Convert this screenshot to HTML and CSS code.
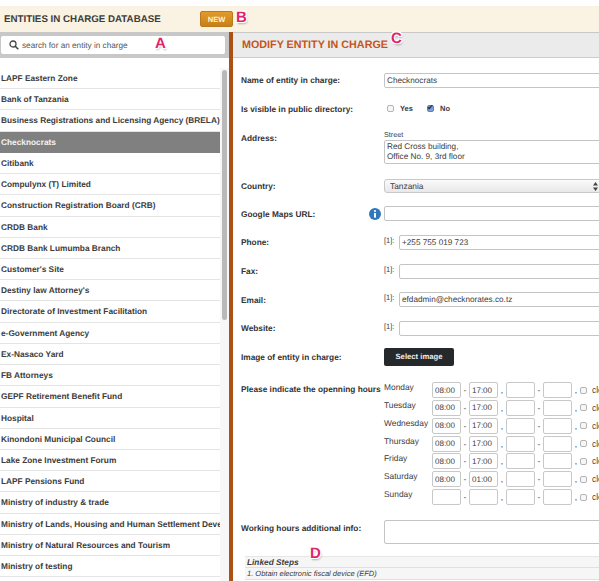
FILE: index.html
```html
<!DOCTYPE html>
<html lang="en">
<head>
    <meta charset="UTF-8">
    <title>Entities in charge database</title>
    <link rel="stylesheet" href="styles.css">
</head>
<body>

    <header class="topbar">
        <h1>ENTITIES IN CHARGE DATABASE</h1>
        <button class="btn-new">NEW</button>
    </header>

    <div class="main">

        <aside class="side">
            <div class="search">
                <div class="search-box">
                    <svg width="10" height="10" viewBox="0 0 10 10"><circle cx="4" cy="4" r="3" fill="none" stroke="#444" stroke-width="1.3"/><path d="M6.2 6.2 L9.3 9.3" stroke="#444" stroke-width="1.6"/></svg>
                    <span>search for an entity in charge</span>
                </div>
            </div>
            <div class="list-wrap">
                <ul class="list">
                    <li>LAPF Eastern Zone</li>
                    <li>Bank of Tanzania</li>
                    <li>Business Registrations and Licensing Agency (BRELA)</li>
                    <li class="selected">Checknocrats</li>
                    <li>Citibank</li>
                    <li>Compulynx (T) Limited</li>
                    <li>Construction Registration Board (CRB)</li>
                    <li>CRDB Bank</li>
                    <li>CRDB Bank Lumumba Branch</li>
                    <li>Customer's Site</li>
                    <li>Destiny law Attorney's</li>
                    <li>Directorate of Investment Facilitation</li>
                    <li>e-Government Agency</li>
                    <li>Ex-Nasaco Yard</li>
                    <li>FB Attorneys</li>
                    <li>GEPF Retirement Benefit Fund</li>
                    <li>Hospital</li>
                    <li>Kinondoni Municipal Council</li>
                    <li>Lake Zone Investment Forum</li>
                    <li>LAPF Pensions Fund</li>
                    <li>Ministry of industry &amp; trade</li>
                    <li>Ministry of Lands, Housing and Human Settlement Development</li>
                    <li>Ministry of Natural Resources and Tourism</li>
                    <li>Ministry of testing</li>
                </ul>
                <div class="track"><div class="thumb"></div></div>
            </div>
        </aside>

        <section class="panel">
            <h2 class="panel-title">MODIFY ENTITY IN CHARGE</h2>

            <div class="form">
                <div class="row">
                    <label>Name of entity in charge:</label>
                    <input class="field" type="text" value="Checknocrats">
                </div>
                <div class="row">
                    <label>Is visible in public directory:</label>
                    <div class="radios">
                        <input class="check" type="checkbox"><b>Yes</b>
                        <input class="check" type="checkbox" checked><b>No</b>
                    </div>
                </div>
                <div class="row row-address">
                    <label>Address:</label>
                    <div class="value">
                        <div class="street">Street</div>
                        <textarea class="field area">Red Cross building,
Office No. 9, 3rd floor</textarea>
                    </div>
                </div>
                <div class="row row-country">
                    <label>Country:</label>
                    <div class="select-wrap">
                        <select class="select"><option>Tanzania</option></select>
                        <svg class="arrows" width="5" height="9" viewBox="0 0 5 9"><path d="M2.5 0 L5 3.5 H0 Z M2.5 9 L5 5.5 H0 Z" fill="#444"/></svg>
                    </div>
                </div>
                <div class="row">
                    <label>Google Maps URL:</label>
                    <svg class="info" width="12" height="12" viewBox="0 0 12 12"><circle cx="6" cy="6" r="6" fill="#2f78bd"/><circle cx="6" cy="3" r="1.1" fill="#fff"/><rect x="5" y="5" width="2" height="4.6" fill="#fff"/></svg>
                    <input class="field" type="text">
                </div>
                <div class="row">
                    <label>Phone:</label>
                    <span class="idx">[1]:</span>
                    <input class="field" type="text" value="+255 755 019 723">
                </div>
                <div class="row">
                    <label>Fax:</label>
                    <span class="idx">[1]:</span>
                    <input class="field" type="text">
                </div>
                <div class="row">
                    <label>Email:</label>
                    <span class="idx">[1]:</span>
                    <input class="field" type="text" value="efdadmin@checknorates.co.tz">
                </div>
                <div class="row">
                    <label>Website:</label>
                    <span class="idx">[1]:</span>
                    <input class="field" type="text">
                </div>
                <div class="row">
                    <label>Image of entity in charge:</label>
                    <button class="btn-image">Select image</button>
                </div>

                <div class="hours">
                    <label>Please indicate the openning hours</label>
                    <div class="days">
                        <div class="day"><span class="day-name">Monday</span><input class="time" value="08:00"><i>-</i><input class="time" value="17:00"><i>,</i><input class="time"><i>-</i><input class="time"><i>,</i><input type="checkbox" class="check closed"><span class="closed-text">closed</span></div>
                        <div class="day"><span class="day-name">Tuesday</span><input class="time" value="08:00"><i>-</i><input class="time" value="17:00"><i>,</i><input class="time"><i>-</i><input class="time"><i>,</i><input type="checkbox" class="check closed"><span class="closed-text">closed</span></div>
                        <div class="day"><span class="day-name">Wednesday</span><input class="time" value="08:00"><i>-</i><input class="time" value="17:00"><i>,</i><input class="time"><i>-</i><input class="time"><i>,</i><input type="checkbox" class="check closed"><span class="closed-text">closed</span></div>
                        <div class="day"><span class="day-name">Thursday</span><input class="time" value="08:00"><i>-</i><input class="time" value="17:00"><i>,</i><input class="time"><i>-</i><input class="time"><i>,</i><input type="checkbox" class="check closed"><span class="closed-text">closed</span></div>
                        <div class="day"><span class="day-name">Friday</span><input class="time" value="08:00"><i>-</i><input class="time" value="17:00"><i>,</i><input class="time"><i>-</i><input class="time"><i>,</i><input type="checkbox" class="check closed"><span class="closed-text">closed</span></div>
                        <div class="day"><span class="day-name">Saturday</span><input class="time" value="08:00"><i>-</i><input class="time" value="01:00"><i>,</i><input class="time"><i>-</i><input class="time"><i>,</i><input type="checkbox" class="check closed"><span class="closed-text">closed</span></div>
                        <div class="day"><span class="day-name">Sunday</span><input class="time"><i>-</i><input class="time"><i>,</i><input class="time"><i>-</i><input class="time"><i>,</i><input type="checkbox" class="check closed"><span class="closed-text">closed</span></div>
                    </div>
                </div>

                <div class="row row-info">
                    <label>Working hours additional info:</label>
                    <textarea class="field info-area"></textarea>
                </div>

                <div class="linked">
                    <div class="linked-head">Linked Steps</div>
                    <div class="linked-item">1. Obtain electronic fiscal device (EFD)</div>
                </div>
            </div>
        </section>
    </div>

    <!-- pink markers on top of the screenshot -->
    <span class="mark mark-a">A</span>
    <span class="mark mark-b">B</span>
    <span class="mark mark-c">C</span>
    <span class="mark mark-d">D</span>

</body>
</html>
```

FILE: styles.css
```css
html, body {
    margin: 0;
    height: 581px;
    overflow: hidden;
    background: #fff;
}

body {
    position: relative;
    padding-top: 6px;
    box-sizing: border-box;
    font-family: "Liberation Sans", Arial, sans-serif;
    color: #3c3c3c;
    font-size: 8.3px;
    text-rendering: geometricPrecision;
}

input, textarea, select, button {
    text-rendering: geometricPrecision;
}

.topbar {
    height: 26px;
    background: #faf3e3;
    display: flex;
    align-items: center;
    padding-left: 4px;
    box-sizing: border-box;
}

.topbar h1 {
    margin: 0;
    width: 196px;
    font-size: 9.75px;
    color: #3c3c3c;
}

.btn-new {
    width: 33px;
    height: 16px;
    padding: 0;
    border: 1px solid #b87a1c;
    border-radius: 2px;
    background: linear-gradient(#e39a2c, #c87f16);
    color: #fff3d8;
    font: bold 7.5px "Liberation Sans", Arial, sans-serif;
}

.main {
    display: flex;
    height: 549px;
}

/* left column */
.side {
    width: 229px;
    flex: none;
}

.search {
    height: 26px;
    background: #c8c8c8;
    padding: 4px 4px 3px 1px;
    box-sizing: border-box;
}

.search-box {
    height: 18px;
    background: #fff;
    border-radius: 2px;
    display: flex;
    align-items: center;
    gap: 3px;
    padding-left: 8px;
    color: #555;
    font-size: 8.2px;
}

.list-wrap {
    display: flex;
    padding-top: 10px;
}

.list {
    list-style: none;
    margin: 0;
    padding: 0;
    width: 220px;
    flex: none;
}

.list li {
    height: 21.22px;
    line-height: 21px;
    box-sizing: border-box;
    border-bottom: 1px solid #e4e4e4;
    padding-left: 1px;
    white-space: nowrap;
    overflow: hidden;
    font-weight: bold;
    color: #3c3c3c;
}

.list li.selected {
    background: #808080;
    color: #f4f4f4;
    border-bottom-color: #808080;
}

.track {
    width: 9px;
    height: 520px;
    background: #f7f7f7;
    padding: 2px 2px 0;
    box-sizing: border-box;
}

.thumb {
    width: 5px;
    height: 250px;
    background: #b9b9b9;
    border-radius: 3px;
}

/* right column */
.panel {
    flex: 1;
    min-width: 0;
    border-left: 4px solid #ab5114;
    overflow: hidden;
}

.panel-title {
    margin: 0;
    height: 26px;
    line-height: 25px;
    box-sizing: border-box;
    padding-left: 9px;
    background: #ebebeb;
    border-top: 1px solid #c8c8c8;
    border-bottom: 1px solid #ccc;
    font-size: 10.75px;
    color: #c4551a;
    white-space: nowrap;
}

.form {
    width: 362px;
    padding: 8px 0 0 8px;
}

.row {
    display: flex;
    align-items: center;
    height: 28.6px;
}

.row > label, .hours > label {
    width: 143px;
    flex: none;
    font-weight: bold;
    color: #333;
}

.field {
    flex: 1;
    min-width: 0;
    height: 15px;
    box-sizing: border-box;
    padding: 0 2px;
    border: 1px solid #c4c4c4;
    border-radius: 2px;
    background: #fff;
    color: #3c3c3c;
    font: 8.2px "Liberation Sans", Arial, sans-serif;
}

/* flat checkbox like the old mac ones */
.check {
    appearance: none;
    position: relative;
    width: 7px;
    height: 7px;
    box-sizing: border-box;
    border: 1px solid #b4b4b4;
    border-radius: 2px;
    background: #f6f6f6;
}

.check:checked {
    background: #7ba0d4;
    border-color: #5e83b8;
}

.check:checked::after {
    content: "\2714";
    position: absolute;
    left: -1px;
    top: -3px;
    font-size: 8px;
    line-height: 10px;
    color: #1d2a44;
}

.radios {
    display: flex;
    align-items: center;
    font-size: 7.5px;
}

.radios .check {
    margin: 0 6px 0 3px;
}

.radios b {
    width: 24px;
}

.row-address {
    height: 48.4px;
    align-items: flex-start;
    padding-top: 10px;
    box-sizing: border-box;
}

.value {
    flex: 1;
    margin-top: -4px;
}

.street {
    font-size: 7.2px;
    line-height: 11px;
}

.area {
    display: block;
    width: 100%;
    height: 24px;
    line-height: 10px;
    resize: none;
    padding: 1px 2px;
    overflow: hidden;
}

.row-country {
    height: 28px;
}

.select-wrap {
    flex: 1;
    position: relative;
}

.select {
    display: block;
    width: 100%;
    height: 14px;
    appearance: none;
    padding: 0 5px;
    border: 1px solid #c8c8c8;
    border-radius: 3px;
    background: linear-gradient(#fafafa, #e8e8e8);
    color: #3c3c3c;
    font: 8.4px "Liberation Sans", Arial, sans-serif;
}

.arrows {
    position: absolute;
    right: 5px;
    top: 3px;
}

.info {
    margin: 0 3px 0 -15px;
    flex: none;
}

.idx {
    width: 15px;
    flex: none;
    font-size: 7.5px;
    margin-top: -4px;
}

.btn-image {
    width: 70px;
    height: 18px;
    padding: 0;
    border: 0;
    border-radius: 2px;
    background: #26292c;
    color: #eee;
    font: bold 7.7px "Liberation Sans", Arial, sans-serif;
}

.hours {
    display: flex;
    margin-top: 10px;
    height: 130px;
}

.hours > label {
    line-height: 16px;
    white-space: nowrap;
}

.day {
    display: flex;
    align-items: center;
    height: 17.85px;
    white-space: nowrap;
}

.day-name {
    width: 48px;
    flex: none;
    margin-top: -6px;
    font-size: 8.4px;
}

.time {
    width: 29px;
    height: 16px;
    box-sizing: border-box;
    padding: 0 2px;
    border: 1px solid #c8c8c8;
    border-radius: 2px;
    color: #3c3c3c;
    font: 8px "Liberation Sans", Arial, sans-serif;
}

.day i {
    width: 8px;
    flex: none;
    text-align: center;
    font-style: normal;
}

.day .closed {
    margin: 0 5px 0 0;
}

.closed-text {
    font-size: 8.3px;
    color: #3c3c3c;
    text-rendering: auto;
}

.row-info {
    height: 25px;
    margin-top: 8px;
}

.row-info label {
    align-self: flex-start;
    line-height: 14px;
    margin-top: 2px;
}

.info-area {
    height: 24px;
    resize: none;
}

.linked {
    margin: 12px 0 0 4px;
    background: #f6f6f6;
    font-style: italic;
    border-top: 1px solid #e6e6e6;
}

.linked-head {
    height: 10px;
    line-height: 10px;
    padding-left: 2px;
    font-weight: bold;
    border-bottom: 1px solid #e0e0e0;
}

.linked-item {
    height: 11px;
    line-height: 11px;
    padding-left: 2px;
    font-size: 7.5px;
    border-bottom: 1px solid #e0e0e0;
}

/* pink letters */
.mark {
    position: absolute;
    font-weight: bold;
    font-size: 15px;
    line-height: 15px;
    color: #e0246e;
    text-shadow: 1px 1px 0 #fff, -1px -1px 0 #fff, 1px -1px 0 #fff, -1px 1px 0 #fff, 1px 2px 2px rgba(0, 0, 0, .3);
}

.mark-a { left: 155px; top: 36px; }
.mark-b { left: 236px; top: 10px; }
.mark-c { left: 391px; top: 31px; }
.mark-d { left: 310px; top: 546px; }
```
